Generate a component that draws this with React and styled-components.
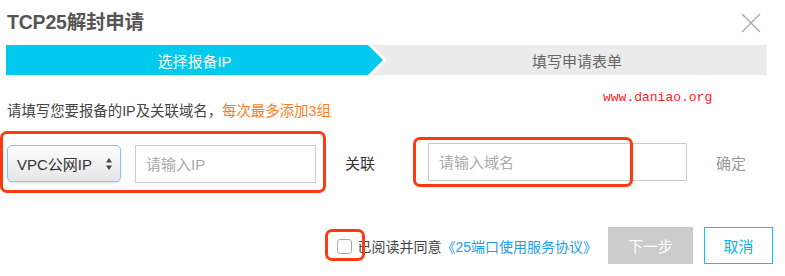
import React from "react";
import styled, {createGlobalStyle} from "styled-components";

const GlobalStyle = createGlobalStyle`
  html, body {
    margin: 0;
    padding: 0;
    background: #fff;
  }
  body {
    font-family: "Liberation Sans", "Noto Sans CJK SC", sans-serif;
    color: #333;
  }
`;

const CYAN = '#00c9ee';
const ANNOT = '#ff3a12';

const Dialog = styled.div`
  position: relative;
  width: 785px;
  height: 276px;
  box-sizing: border-box;
  overflow: hidden;
`;

const Header = styled.div`
  display: flex;
  justify-content: space-between;
  align-items: center;
  height: 36px;
  padding: 4px 24px 0 7px;
  box-sizing: border-box;
  margin-bottom: 9px;
`;

const Title = styled.h1`
  margin: 0;
  font-size: 19.5px;
  font-weight: bold;
  color: #555;
  letter-spacing: -0.2px;
`;

const Close = styled.svg`
  width: 20px;
  height: 20px;
  margin-top: 6px;
`;

const Steps = styled.div`
  display: flex;
  height: 30px;
  margin-left: 6px;
  width: 761px;
`;

const Step = styled.div`
  display: flex;
  align-items: center;
  justify-content: center;
  box-sizing: border-box;
  font-size: 15px;
  height: 30px;
  color: ${props => props.active ? '#fff' : '#666'};
  background: ${props => props.active ? CYAN : '#ebebeb'};
  width: ${props => props.active ? '377px' : '395px'};
  margin-left: ${props => props.active ? '0' : '-11px'};
  padding-left: ${props => props.active ? '0' : '15px'};
  clip-path: ${props => props.active
    ? 'polygon(0 0, calc(100% - 15px) 0, 100% 50%, calc(100% - 15px) 100%, 0 100%)'
    : 'polygon(0 0, 100% 0, 100% 100%, 0 100%, 15px 50%)'};
`;

const Notice = styled.p`
  margin: 26px 0 0 7px;
  font-size: 14.4px;
  line-height: 20px;
  color: #444;
`;

const Hint = styled.span`
  color: #ff7d1e;
`;

const Watermark = styled.span`
  position: absolute;
  left: 603px;
  top: 90px;
  font-family: "Liberation Mono", "DejaVu Sans Mono", monospace;
  font-size: 13px;
  color: #ff2020;
`;

const Row = styled.div`
  display: flex;
  align-items: center;
  margin-top: 10px;
  height: 62px;
`;

const Annotated = styled.div`
  display: flex;
  align-items: flex-start;
  gap: 14px;
  height: 62px;
  box-sizing: border-box;
  padding: 11px 7px 0 4px;
  border: 3px solid ${ANNOT};
  border-radius: 7px;
`;

const Select = styled.div`
  display: flex;
  align-items: center;
  justify-content: space-between;
  width: 114px;
  height: 37px;
  box-sizing: border-box;
  padding: 0 7px 0 9px;
  border: 1px solid #8cc3ee;
  border-radius: 5px;
  background: linear-gradient(#fdfdfd, #e6e6e6);
  box-shadow: 0 1px 2px rgba(0, 0, 0, 0.15);
  font-size: 15px;
  color: #333;
`;

const Input = styled.input`
  width: ${props => props.width}px;
  height: 38px;
  box-sizing: border-box;
  border: 1px solid #ccc;
  padding: 0 10px;
  font-family: inherit;
  font-size: 15px;
  color: #333;
  outline: none;
  &::placeholder {
    color: #aaa;
  }
`;

const Label = styled.span`
  font-size: 15px;
  color: ${props => props.muted ? '#999' : '#333'};
  margin-left: ${props => props.gap}px;
`;

const Field = styled.div`
  position: relative;
  display: flex;
  margin-left: 53px;
`;

const Mark = styled.div`
  position: absolute;
  box-sizing: border-box;
  border: 3px solid ${ANNOT};
  border-radius: 7px;
  pointer-events: none;
`;

const Footer = styled.div`
  display: flex;
  justify-content: flex-end;
  align-items: center;
  gap: 11px;
  margin-top: 34px;
  padding-right: 12px;
`;

const Agree = styled.label`
  display: flex;
  align-items: center;
  font-size: 14px;
  color: #444;
`;

const Check = styled.span`
  position: relative;
  width: 15px;
  height: 15px;
  box-sizing: border-box;
  border: 1px solid #aaa;
  border-radius: 3px;
  background: #fff;
  margin-right: 5px;
  margin-top: 2px;
`;

const Link = styled.a`
  color: #1e9de8;
`;

const Button = styled.button`
  height: 37px;
  box-sizing: border-box;
  font-family: inherit;
  font-size: 15px;
  width: ${props => props.primary ? '85px' : '69px'};
  border: 1px solid ${props => props.primary ? '#ccc' : CYAN};
  background: ${props => props.primary ? '#ccc' : '#fff'};
  color: ${props => props.primary ? '#fff' : '#0ab3e3'};
`;

const Arrows = () => (
    <svg width="8" height="14" viewBox="0 0 8 14">
        <path d="M4 1 L7 5.5 L1 5.5 Z" fill="#444"/>
        <path d="M4 13 L7 8.5 L1 8.5 Z" fill="#444"/>
    </svg>
);

export default function App() {
    return (
        <Dialog>
            <GlobalStyle/>
            <Header>
                <Title>TCP25解封申请</Title>
                <Close viewBox="0 0 20 20">
                    <path d="M1 1 L19 19 M19 1 L1 19" stroke="#aaa" strokeWidth="1.4" fill="none"/>
                </Close>
            </Header>
            <Steps>
                <Step active>选择报备IP</Step>
                <Step>填写申请表单</Step>
            </Steps>
            <Notice>
                请填写您要报备的IP及关联域名，<Hint>每次最多添加3组</Hint>
            </Notice>
            <Watermark>www.daniao.org</Watermark>
            <Row>
                <Annotated>
                    <Select>
                        VPC公网IP
                        <Arrows/>
                    </Select>
                    <Input width={181} placeholder="请输入IP"/>
                </Annotated>
                <Label gap={19}>关联</Label>
                <Field>
                    <Input width={259} placeholder="请输入域名"/>
                    <Mark style={{left: -15, top: -6, width: 220, height: 50}}/>
                </Field>
                <Label muted gap={29}>确定</Label>
            </Row>
            <Footer>
                <Agree>
                    <Check>
                        <Mark style={{left: -13, top: -11, width: 40, height: 32}}/>
                    </Check>
                    已阅读并同意<Link>《25端口使用服务协议》</Link>
                </Agree>
                <Button primary>下一步</Button>
                <Button>取消</Button>
            </Footer>
        </Dialog>
    );
}
